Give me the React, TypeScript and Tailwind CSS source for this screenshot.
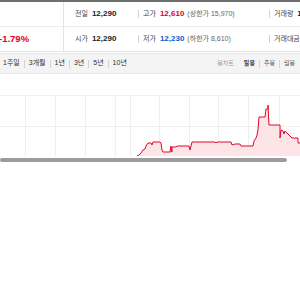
import React from 'react';

const font = { fontFamily: "'Liberation Sans', 'Noto Sans CJK KR', sans-serif" };

const linePts =
  'M137,156 L139,155 L141,153 L143,150 L145,149 L146,146 L148,143 L151,143 L152,145 L153,142 L160,142 L161,143 L162,150 L163,152 L170,152 L171,146 L171.5,152 L172,152 L172,147 L176,147 L177,146 L189,146 L190,150 L191,146 L192,142 L215,142 L216,143 L217,142 L231,142 L232,145 L235,144 L240,144 L241,146 L253,146 L254,141 L256,138 L257,135 L258,130 L259,117 L265,117 L266,109 L268,109 L268,105 L269,125 L280,125 L280,138 L281,130 L283,131 L284,134 L285,131 L287,133 L289,135 L291,137 L292,138 L298,138 L298,143 L300,143';

const vLines = [25, 55, 85, 115, 130, 159, 189, 218, 248, 279];

function Sep() {
  return <span className="inline-block h-[8px] w-px bg-[#d4d4d4]" />;
}

function Stat({ label, value, color, extra }: { label: string; value: string; color?: string; extra?: string }) {
  return (
    <div className="flex items-center whitespace-nowrap">
      <span className="text-[7px] text-[#444]">{label}</span>
      <span className={`ml-[4px] text-[8px] font-bold ${color ?? 'text-[#222]'}`}>{value}</span>
      {extra && <span className="ml-[3px] text-[7px] text-[#666]">{extra}</span>}
    </div>
  );
}

export default function App() {
  return (
    <div className="w-[300px] h-[300px] bg-white overflow-hidden" style={font}>
      {/* summary table */}
      <div className="flex border-t-2 border-[#6e6e6e] border-b border-b-[#e4e4e4]">
        <div className="w-[64px] shrink-0 border-r border-[#e4e4e4] flex flex-col">
          <div className="h-[25px] border-b border-[#ececec]" />
          <div className="h-[24px] flex items-center">
            <span className="text-[9.5px] font-bold text-[#e0001f] -ml-[1px]">-1.79%</span>
          </div>
        </div>
        <div className="flex-1 flex flex-col overflow-hidden">
          <div className="h-[25px] flex items-center border-b border-[#ececec]">
            <div className="w-[74px] pl-[11px] shrink-0">
              <Stat label="전일" value="12,290" />
            </div>
            <div className="w-[131px] shrink-0 flex items-center gap-[4px]">
              <Sep />
              <Stat label="고가" value="12,610" color="text-[#e0001f]" extra="(상한가 15,970)" />
            </div>
            <div className="flex items-center gap-[4px]">
              <Sep />
              <Stat label="거래량" value="1" />
            </div>
          </div>
          <div className="h-[24px] flex items-center">
            <div className="w-[74px] pl-[11px] shrink-0">
              <Stat label="시가" value="12,290" />
            </div>
            <div className="w-[131px] shrink-0 flex items-center gap-[4px]">
              <Sep />
              <Stat label="저가" value="12,230" color="text-[#1358d0]" extra="(하한가 8,610)" />
            </div>
            <div className="flex items-center gap-[4px]">
              <Sep />
              <Stat label="거래대금" value="" />
            </div>
          </div>
        </div>
      </div>

      {/* period tabs */}
      <div className="mt-px h-[21px] bg-[#f4f4f5] border-y border-[#e6e6e6] flex items-center justify-between pl-[3px] pr-[5px] text-[7px] whitespace-nowrap">
        <div className="flex items-center gap-[4px] text-[#333]">
          <span>1주일</span><Sep />
          <span>3개월</span><Sep />
          <span>1년</span><Sep />
          <span>3년</span><Sep />
          <span>5년</span><Sep />
          <span>10년</span>
        </div>
        <div className="flex items-center gap-[4px] text-[6px]">
          <span className="text-[#999] mr-[6px]">봉차트</span>
          <span className="text-[#333] font-bold">일봉</span><Sep />
          <span className="text-[#555]">주봉</span><Sep />
          <span className="text-[#555]">월봉</span>
        </div>
      </div>

      {/* chart */}
      <svg width="300" height="82" viewBox="0 0 300 82" className="block">
        <g transform="translate(0,-74)">
          <line x1="0" y1="95.5" x2="300" y2="95.5" stroke="#efefef" />
          <line x1="0" y1="126.5" x2="300" y2="126.5" stroke="#efefef" />
          {vLines.map((x) => (
            <line key={x} x1={x + 0.5} y1="95" x2={x + 0.5} y2="156" stroke="#efefef" />
          ))}
          <path d={linePts + ' L300,156 L137,156 Z'} fill="#fde4e7" />
          <path d={linePts} fill="none" stroke="#e2062f" strokeWidth="1" />
        </g>
      </svg>

      {/* scrollbar */}
      <div className="mt-[2px] h-[4px] w-[287px] rounded-full bg-[#9c9c9c]" />
    </div>
  );
}
